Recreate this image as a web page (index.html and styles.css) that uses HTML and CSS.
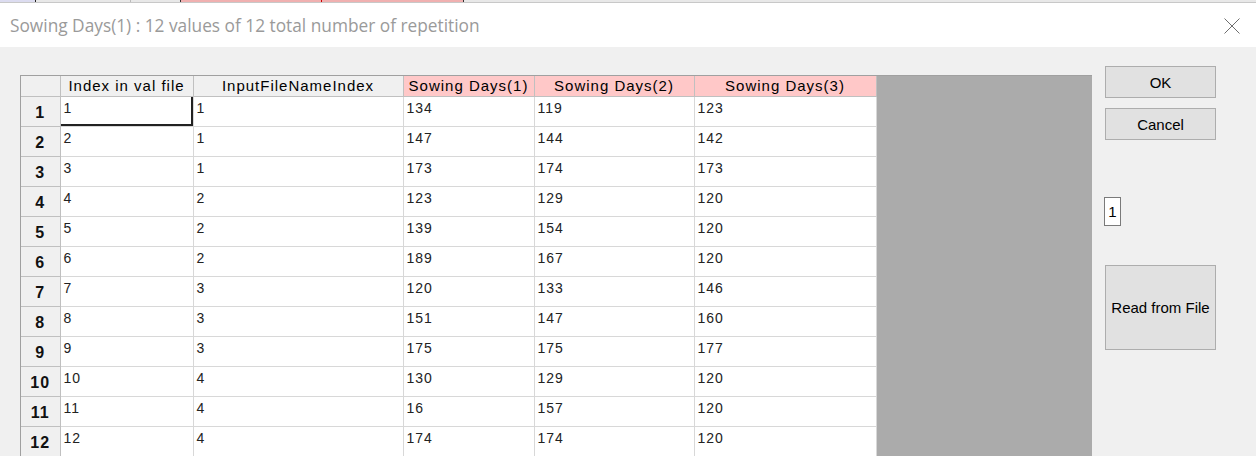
FILE: index.html
```html
<!DOCTYPE html>
<html lang="en">
  <head>
    <meta charset="UTF-8" />
    <title>Sowing Days</title>
    <link rel="stylesheet" href="styles.css">
  </head>
  <body>
    <div class="backstrip">
      <span class="seg seg-blue"></span>
      <span class="seg seg-grey1"></span>
      <span class="seg seg-grey2"></span>
      <span class="seg seg-pink1"></span>
      <span class="seg seg-pink2"></span>
      <span class="seg seg-grey3"></span>
    </div>

    <div class="titlebar">
      <span class="title">Sowing Days(1) : 12 values of 12 total number of repetition</span>
      <svg class="close" width="16" height="16" viewBox="0 0 16 16">
        <path d="M0.5 0.5 L15.5 15.5 M15.5 0.5 L0.5 15.5" stroke="#6e6e6e" stroke-width="1" fill="none" />
      </svg>
    </div>

    <div class="main">
      <div class="grid-area">
        <table class="grid">
          <thead>
            <tr>
              <th class="corner"></th>
              <th class="c1">Index in val file</th>
              <th class="c2">InputFileNameIndex</th>
              <th class="c3 pink">Sowing Days(1)</th>
              <th class="c4 pink">Sowing Days(2)</th>
              <th class="c5 pink">Sowing Days(3)</th>
            </tr>
          </thead>
          <tbody id="rows"></tbody>
        </table>
      </div>

      <div class="side">
        <button class="btn">OK</button>
        <button class="btn">Cancel</button>
        <div class="counter">1</div>
        <button class="btn btn-tall">Read from File</button>
      </div>
    </div>

    <script>
      const data = [
        [1, 1, 134, 119, 123],
        [2, 1, 147, 144, 142],
        [3, 1, 173, 174, 173],
        [4, 2, 123, 129, 120],
        [5, 2, 139, 154, 120],
        [6, 2, 189, 167, 120],
        [7, 3, 120, 133, 146],
        [8, 3, 151, 147, 160],
        [9, 3, 175, 175, 177],
        [10, 4, 130, 129, 120],
        [11, 4, 16, 157, 120],
        [12, 4, 174, 174, 120],
      ];

      const tbody = document.getElementById("rows");
      data.forEach((row, index) => {
        const tr = tbody.insertRow();
        let html = `<th class="rowhead">${index + 1}</th>`;
        row.forEach((value, col) => {
          const sel = index === 0 && col === 0 ? ' class="selected"' : "";
          html += `<td${sel}>${value}</td>`;
        });
        tr.innerHTML = html;
      });
    </script>
  </body>
</html>
```

FILE: styles.css
```css
* {
  margin: 0;
  padding: 0;
  box-sizing: border-box;
}

body {
  width: 1256px;
  height: 456px;
  overflow: hidden;
  background-color: #f0f0f0;
  font-family: "Liberation Sans", Arial, sans-serif;
}

.backstrip {
  display: flex;
  height: 3px;
  background-color: #e6e6e6;
  border-bottom: 1px solid #c8c8c8;
}

.seg {
  height: 2px;
}

.seg-blue {
  width: 36px;
  background-color: #dcdcf0;
  border-right: 1px solid #222;
}

.seg-grey1 {
  width: 95px;
  background-color: #e8e8e8;
  border-right: 1px solid #bbb;
}

.seg-grey2 {
  width: 49px;
  background-color: #e8e8e8;
}

.seg-pink1 {
  width: 142px;
  background-color: #f0b0b0;
  border-left: 1px solid #333;
  border-right: 1px solid #c00;
}

.seg-pink2 {
  width: 142px;
  background-color: #f0b0b0;
  border-right: 1px solid #333;
}

.seg-grey3 {
  flex: 1;
  background-color: #e8e8e8;
}

.titlebar {
  height: 44px;
  background-color: white;
  display: flex;
  align-items: center;
  justify-content: space-between;
  padding: 0 16px 0 10px;
}

.title {
  font-family: "Open Sans", "Noto Sans", sans-serif;
  font-size: 17.3px;
  color: #9a9a9a;
  margin-top: 1px;
}

.close {
  display: block;
  margin-top: 2px;
}

.main {
  display: flex;
  align-items: flex-start;
  padding: 19px 0 0 20px;
}

.grid-area {
  width: 1072px;
  height: 400px;
  margin-top: 9px;
  background-color: #ababab;
  border-top: 1px solid #a0a0a0;
  border-left: 1px solid #a0a0a0;
}

.grid {
  border-collapse: collapse;
  table-layout: fixed;
  background-color: white;
}

.grid th,
.grid td {
  border: 1px solid #d8d8d8;
  font-size: 14px;
  letter-spacing: 1px;
  white-space: nowrap;
  overflow: hidden;
}

.grid thead th {
  height: 20px;
  line-height: 18px;
  background-color: #f0f0f0;
  border-color: #c0c0c0;
  font-weight: normal;
  font-size: 15px;
  color: #000;
  text-align: center;
  padding: 0;
  border-top: none;
}

.grid thead th.pink {
  background-color: #ffc8c8;
}

.corner {
  width: 39px;
  border-left: none !important;
}

.c1 { width: 133px; }
.c2 { width: 210px; }
.c3 { width: 131px; }
.c4 { width: 160px; }
.c5 { width: 182px; }

.grid td {
  height: 30px;
  vertical-align: top;
  padding: 3px 0 0 3px;
  color: #222;
}

.grid .rowhead {
  background-color: #f0f0f0;
  border-color: #c0c0c0;
  border-left: none;
  font-size: 16px;
  font-weight: bold;
  color: #111;
  text-align: center;
  vertical-align: middle;
  padding-top: 3px;
}

.grid td.selected {
  box-shadow: inset -2px -2px 0 #222;
}

.side {
  display: flex;
  flex-direction: column;
  margin-left: 13px;
}

.btn {
  width: 111px;
  height: 32px;
  background-color: #e1e1e1;
  border: 1px solid #adadad;
  font-family: "Liberation Sans", Arial, sans-serif;
  font-size: 15px;
  color: #000;
  margin-bottom: 10px;
}

.counter {
  width: 17px;
  height: 29px;
  margin: 47px 0 39px -1px;
  background-color: white;
  border: 1px solid #7a7a7a;
  font-size: 15px;
  text-align: center;
  line-height: 27px;
}

.btn-tall {
  height: 85px;
}
```
